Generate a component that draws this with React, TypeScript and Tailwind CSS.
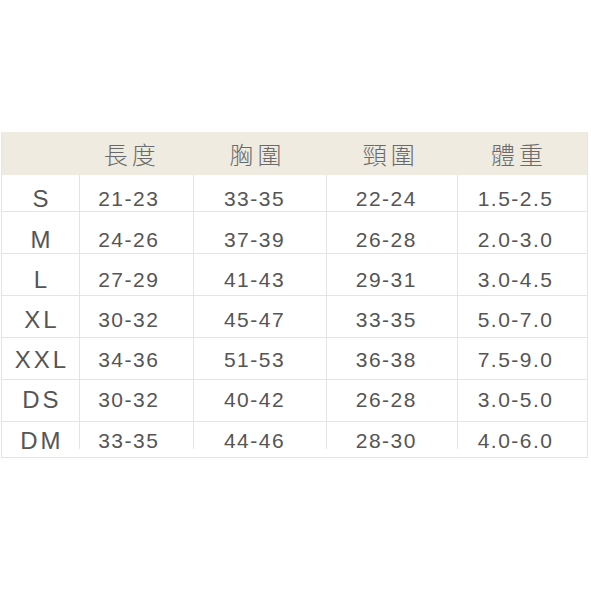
const HEADERS = ['長度', '胸圍', '頸圍', '體重'];

const ROWS: { size: string; values: string[]; h: string; pad: string }[] = [
  { size: 'S', values: ['21-23', '33-35', '22-24', '1.5-2.5'], h: 'h-[37px]', pad: 'pt-[12px]' },
  { size: 'M', values: ['24-26', '37-39', '26-28', '2.0-3.0'], h: 'h-[42px]', pad: 'pt-[14px]' },
  { size: 'L', values: ['27-29', '41-43', '29-31', '3.0-4.5'], h: 'h-[42px]', pad: 'pt-[10px]' },
  { size: 'XL', values: ['30-32', '45-47', '33-35', '5.0-7.0'], h: 'h-[42px]', pad: 'pt-[6px]' },
  { size: 'XXL', values: ['34-36', '51-53', '36-38', '7.5-9.0'], h: 'h-[42px]', pad: 'pt-[2px]' },
  { size: 'DS', values: ['30-32', '40-42', '26-28', '3.0-5.0'], h: 'h-[42px]', pad: 'pb-[2px]' },
];

const LAST = { size: 'DM', values: ['33-35', '44-46', '28-30', '4.0-6.0'] };

// column widths and text nudges (text sits a bit left of centre in the source)
const COLS = ['w-[114px] pr-[15px]', 'w-[134px] pr-[11px]', 'w-[131px] pr-[12px]', 'w-[130px] pr-[14px]'];
const HEAD_COLS = ['w-[114px] pr-[8px]', 'w-[134px] pr-[4px]', 'w-[131px] pr-[2px]', 'w-[130px] pr-[6px]'];

const cellText = 'text-[21px] tracking-[1.5px] text-[#555]';
const sizeText = 'text-[24px] tracking-[3px] pl-[3px] text-[#555]';

export default function App() {
  return (
    <div
      className="h-[591px] w-[591px] bg-white pt-[132px]"
      style={{ fontFamily: '"Liberation Sans", Arial, sans-serif' }}
    >
      <div className="ml-px w-[587px] border-x border-b border-[#e4e4e4]">
        <div className="flex h-[43px] bg-[#efebe1]">
          <div className="w-[77px]" />
          {HEADERS.map((h, i) => (
            <div
              key={h}
              className={`${HEAD_COLS[i]} flex items-center justify-center text-[24px] font-light tracking-[4px] text-[#6a6a6a]`}
              style={{ fontFamily: '"Noto Sans CJK TC", "Noto Sans CJK SC", sans-serif' }}
            >
              {h}
            </div>
          ))}
        </div>
        {ROWS.map((row) => (
          <div key={row.size} className={`flex ${row.h} border-b border-[#e4e4e4]`}>
            <div className={`flex w-[77px] items-center justify-center ${row.pad} ${sizeText}`}>{row.size}</div>
            {row.values.map((v, i) => (
              <div
                key={i}
                className={`${COLS[i]} flex items-center justify-center ${row.pad} border-l border-[#e4e4e4] ${cellText}`}
              >
                {v}
              </div>
            ))}
          </div>
        ))}
        {/* last row: divider lines stop short of the bottom border */}
        <div className="flex h-[35px]">
          <div className={`flex w-[77px] justify-center leading-[38px] ${sizeText}`}>{LAST.size}</div>
          {LAST.values.map((v, i) => (
            <div
              key={i}
              className={`${COLS[i]} flex h-[27px] justify-center border-l border-[#e4e4e4] leading-[38px] ${cellText}`}
            >
              {v}
            </div>
          ))}
        </div>
      </div>
    </div>
  );
}
